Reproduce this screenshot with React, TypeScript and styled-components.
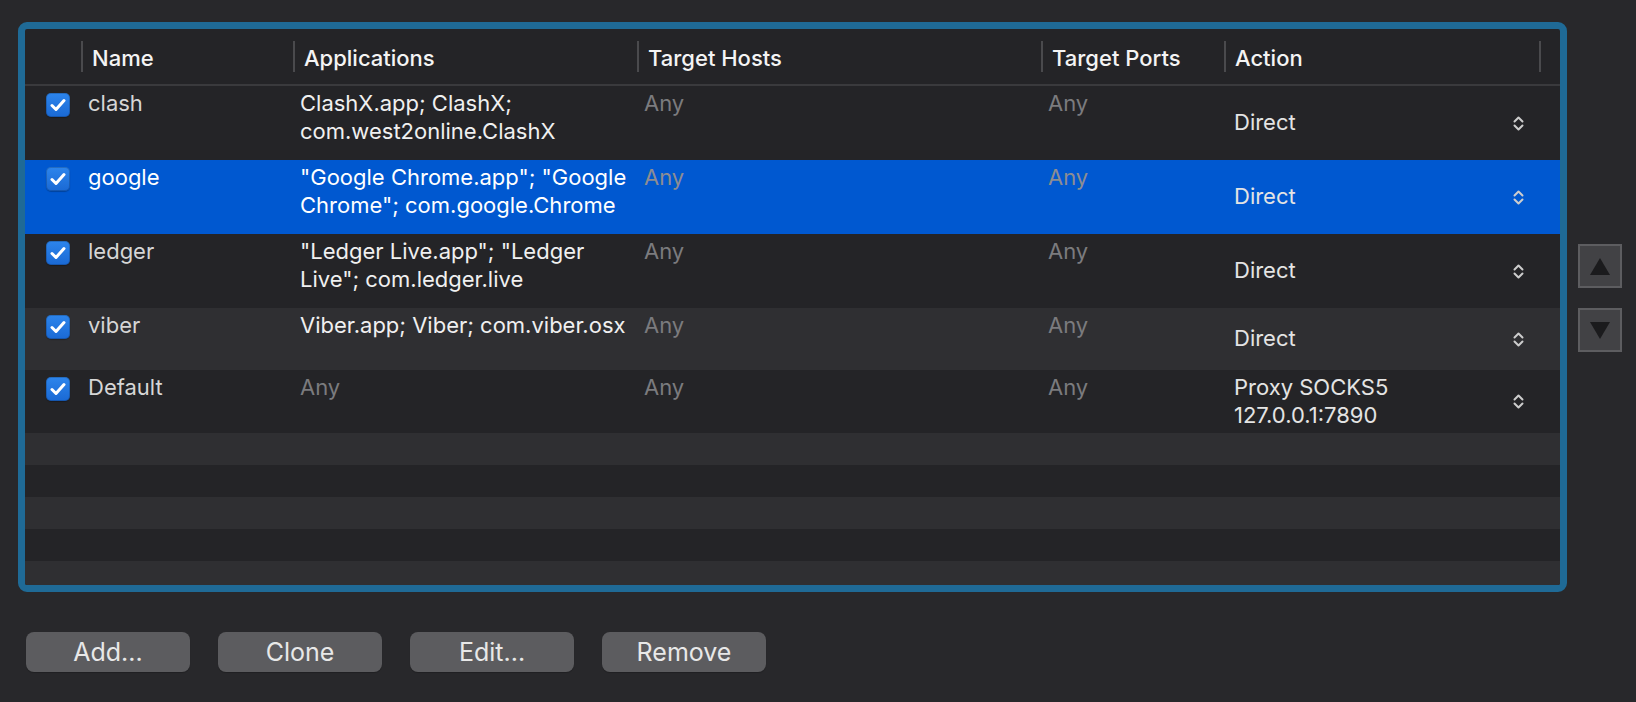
import React from 'react';
import styled, { createGlobalStyle } from 'styled-components';

const GlobalStyle = createGlobalStyle`
  html, body { margin: 0; padding: 0; background: #28282b; }
  body { font-family: Inter, "Liberation Sans", sans-serif; -webkit-font-smoothing: antialiased; }
  * { box-sizing: border-box; }
`;

const COLS = '56px 212px 344px 404px 183px 315px 21px';

const Page = styled.div`
  width: 1636px;
  height: 702px;
  padding: 22px 0 0 18px;
  background: #28282b;
  overflow: hidden;
`;

const TopArea = styled.div`
  display: flex;
  align-items: flex-start;
`;

const Frame = styled.div`
  width: 1549px;
  height: 570px;
  border: 7px solid #1f6a96;
  border-radius: 9px;
  background: #242427;
  overflow: hidden;
  display: flex;
  flex-direction: column;
`;

const HeaderRow = styled.div`
  display: grid;
  grid-template-columns: ${COLS};
  height: 57px;
  flex-shrink: 0;
  border-bottom: 2px solid #3a3a3d;
`;

const HeaderCell = styled.div`
  display: flex;
  align-items: center;
  gap: 9px;
  font-size: 22px;
  font-weight: 500;
  color: #f4f4f4;
  white-space: nowrap;
`;

const HeaderLabel = styled.span`
  padding-top: 3px;
`;

const Divider = styled.span`
  width: 2px;
  height: 31px;
  background: #4a4a4d;
  flex-shrink: 0;
`;

type Variant = 'dark' | 'light' | 'selected';

const bg = (v: Variant) => (v === 'selected' ? '#0058d0' : v === 'light' ? '#2f2f32' : '#242427');

const Row = styled.div<{ $variant: Variant }>`
  display: grid;
  grid-template-columns: ${COLS};
  min-height: 62px;
  padding: 4px 0;
  flex-shrink: 0;
  background: ${(p) => bg(p.$variant)};
`;

const EmptyRow = styled.div<{ $variant: Variant }>`
  height: 32px;
  flex-shrink: 0;
  background: ${(p) => bg(p.$variant)};
`;

const CheckCell = styled.div`
  padding: 3px 0 0 21px;
`;

const CheckBox = styled.span`
  display: flex;
  align-items: center;
  justify-content: center;
  width: 24px;
  height: 24px;
  border-radius: 5px;
  background: linear-gradient(#2d85ec, #1a69d4);
  box-shadow: inset 0 0 0 1px rgba(0, 0, 0, 0.18), 0 1px 1px rgba(0, 0, 0, 0.25);
`;

type Tone = 'name' | 'main' | 'muted';
const toneColor = (t: Tone, sel: boolean) =>
  t === 'muted' ? (sel ? '#8d8d92' : '#7b7b7e') : t === 'name' ? (sel ? '#ffffff' : '#d6d6d6') : sel ? '#ffffff' : '#f0f0f0';

const TextCell = styled.div<{ $tone: Tone; $sel: boolean }>`
  padding: 0 0 11px 7px;
  font-size: 22px;
  line-height: 27.5px;
  white-space: pre;
  color: ${(p) => toneColor(p.$tone, p.$sel)};
`;

const ActionCell = styled.div`
  display: flex;
  align-items: center;
  justify-content: space-between;
  padding: 0 15px 0 10px;
  font-size: 22px;
  line-height: 27.5px;
  white-space: pre;
  color: #e4e4e4;
`;

const SideControls = styled.div`
  display: flex;
  flex-direction: column;
  gap: 20px;
  margin-left: 11px;
  padding-top: 222px;
`;

const ArrowButton = styled.div`
  width: 44px;
  height: 44px;
  border: 2px solid #5d5d60;
  background: #424245;
  display: flex;
  align-items: center;
  justify-content: center;
`;

const ButtonRow = styled.div`
  display: flex;
  gap: 28px;
  margin-top: 40px;
  padding-left: 8px;
`;

const PushButton = styled.button`
  width: 164px;
  height: 40px;
  border: none;
  border-radius: 8px;
  background: #5c5c5f;
  color: #e8e8e8;
  font-family: Inter, "Liberation Sans", sans-serif;
  font-size: 25px;
  padding: 0;
  box-shadow: 0 1px 1px rgba(0, 0, 0, 0.2);
`;

const Check = () => (
  <svg width="16" height="14" viewBox="0 0 16 14">
    <path d="M2 7.5 L6 11.5 L14 2.5" fill="none" stroke="#fff" strokeWidth="3" strokeLinecap="round" strokeLinejoin="round" />
  </svg>
);

const Chevrons = () => (
  <svg width="11" height="15" viewBox="0 0 11 15">
    <path d="M1.5 5.5 L5.5 1.5 L9.5 5.5 M1.5 9.5 L5.5 13.5 L9.5 9.5" fill="none" stroke="#cdcdcd" strokeWidth="2" strokeLinecap="round" strokeLinejoin="round" />
  </svg>
);

const Triangle = ({ down }: { down?: boolean }) => (
  <svg width="20" height="17" viewBox="0 0 20 17">
    <polygon points={down ? '0,0 20,0 10,17' : '10,0 20,17 0,17'} fill="#1b1b1d" />
  </svg>
);

interface Rule {
  name: string;
  apps: string | null;
  hosts: string | null;
  ports: string | null;
  action: string;
}

const rules: Rule[] = [
  { name: 'clash', apps: 'ClashX.app; ClashX;\ncom.west2online.ClashX', hosts: null, ports: null, action: 'Direct' },
  { name: 'google', apps: '"Google Chrome.app"; "Google\nChrome"; com.google.Chrome', hosts: null, ports: null, action: 'Direct' },
  { name: 'ledger', apps: '"Ledger Live.app"; "Ledger\nLive"; com.ledger.live', hosts: null, ports: null, action: 'Direct' },
  { name: 'viber', apps: 'Viber.app; Viber; com.viber.osx', hosts: null, ports: null, action: 'Direct' },
  { name: 'Default', apps: null, hosts: null, ports: null, action: 'Proxy SOCKS5\n127.0.0.1:7890' },
];

const SELECTED = 1;
const headers = ['Name', 'Applications', 'Target Hosts', 'Target Ports', 'Action'];

export default function App() {
  const variantAt = (i: number): Variant => (i === SELECTED ? 'selected' : i % 2 === 1 ? 'light' : 'dark');
  return (
    <Page>
      <GlobalStyle />
      <TopArea>
        <Frame>
          <HeaderRow>
            <HeaderCell />
            {headers.map((h) => (
              <HeaderCell key={h}>
                <Divider />
                <HeaderLabel>{h}</HeaderLabel>
              </HeaderCell>
            ))}
            <HeaderCell>
              <Divider />
            </HeaderCell>
          </HeaderRow>
          {rules.map((r, i) => {
            const sel = i === SELECTED;
            return (
              <Row key={r.name} $variant={variantAt(i)}>
                <CheckCell>
                  <CheckBox>
                    <Check />
                  </CheckBox>
                </CheckCell>
                <TextCell $tone="name" $sel={sel}>{r.name}</TextCell>
                <TextCell $tone={r.apps ? 'main' : 'muted'} $sel={sel}>{r.apps ?? 'Any'}</TextCell>
                <TextCell $tone={r.hosts ? 'main' : 'muted'} $sel={sel}>{r.hosts ?? 'Any'}</TextCell>
                <TextCell $tone={r.ports ? 'main' : 'muted'} $sel={sel}>{r.ports ?? 'Any'}</TextCell>
                <ActionCell>
                  <span>{r.action}</span>
                  <Chevrons />
                </ActionCell>
                <div />
              </Row>
            );
          })}
          {[5, 6, 7, 8, 9].map((i) => (
            <EmptyRow key={i} $variant={variantAt(i)} />
          ))}
        </Frame>
        <SideControls>
          <ArrowButton>
            <Triangle />
          </ArrowButton>
          <ArrowButton>
            <Triangle down />
          </ArrowButton>
        </SideControls>
      </TopArea>
      <ButtonRow>
        {['Add...', 'Clone', 'Edit...', 'Remove'].map((b) => (
          <PushButton key={b}>{b}</PushButton>
        ))}
      </ButtonRow>
    </Page>
  );
}
